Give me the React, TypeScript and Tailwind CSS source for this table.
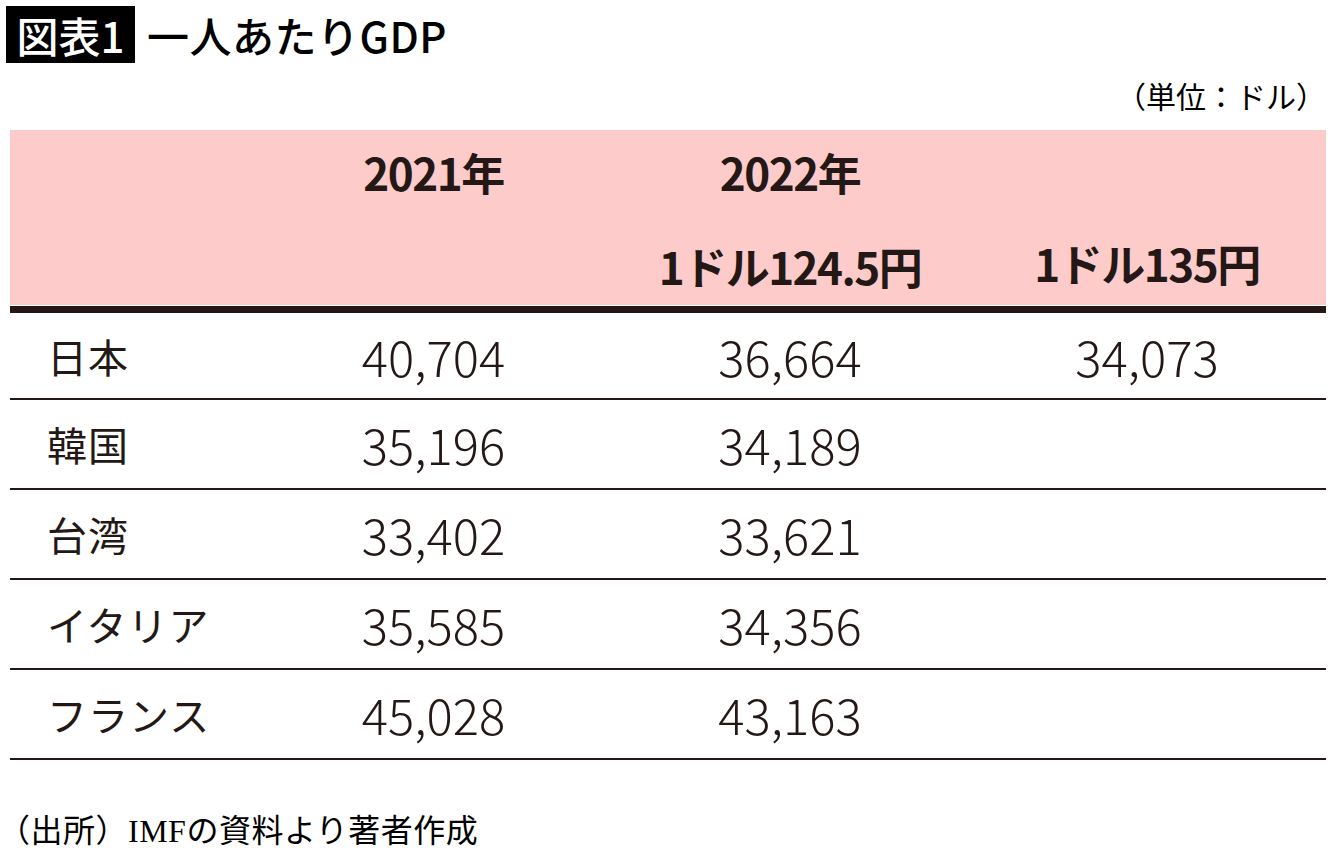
import React from "react";

const sans = "font-['Noto_Sans_CJK_JP','Noto_Sans',sans-serif]";

const rows = [
  { name: "日本", y2021: "40,704", y2022: "36,664", y135: "34,073" },
  { name: "韓国", y2021: "35,196", y2022: "34,189", y135: "" },
  { name: "台湾", y2021: "33,402", y2022: "33,621", y135: "" },
  { name: "イタリア", y2021: "35,585", y2022: "34,356", y135: "" },
  { name: "フランス", y2021: "45,028", y2022: "43,163", y135: "" },
];

export default function App() {
  return (
    <div className={`w-[1340px] h-[862px] bg-white text-[#231815] ${sans}`}>
      {/* title */}
      <div className="flex items-center pt-[6px] pl-[6px]">
        <div className="bg-black text-white w-[129px] h-[57px] flex items-center justify-center text-[42px] font-medium leading-none">
          図表1
        </div>
        <div className="ml-[12px] text-[42px] font-medium leading-none text-black tracking-[0.5px]">
          一人あたりGDP
        </div>
      </div>

      <div className="flex justify-end pr-[14px] mt-[12px] text-[30px] leading-[40px] text-black">
        （単位：ドル）
      </div>

      {/* table */}
      <div className="ml-[10px] w-[1316px] mt-[15px]">
        <div className="bg-[#fecbcb] h-[175px] grid grid-cols-[245px_357px_356px_358px] font-bold text-[44px] leading-none tracking-[-1.5px]">
          <div />
          <div className="flex justify-center pt-[20px]">2021年</div>
          <div className="flex flex-col items-center pt-[20px] gap-[50px]">
            <span>2022年</span>
            <span>1ドル124.5円</span>
          </div>
          <div className="flex justify-center items-end pb-[20px]">1ドル135円</div>
        </div>
        <div className="h-[1px] bg-white" />
        <div className="h-[7px] bg-[#231815]" />
        {rows.map((r, i) => (
          <div
            key={r.name}
            className={`grid grid-cols-[245px_357px_356px_358px] items-center border-b-2 border-[#231815] ${
              i === 0 ? "h-[87px]" : "h-[90px]"
            } text-[49px] font-light`}
          >
            <div className="pl-[37px] text-[40px] font-normal tracking-[1px]">{r.name}</div>
            <div className="text-center">{r.y2021}</div>
            <div className="text-center">{r.y2022}</div>
            <div className="text-center">{r.y135}</div>
          </div>
        ))}
      </div>

      <div className="mt-[55px] -ml-[2px] text-[32px] leading-none text-black tracking-[0.5px] font-['Liberation_Serif','Noto_Sans_CJK_JP',serif]">
        （出所）IMFの資料より著者作成
      </div>
    </div>
  );
}
